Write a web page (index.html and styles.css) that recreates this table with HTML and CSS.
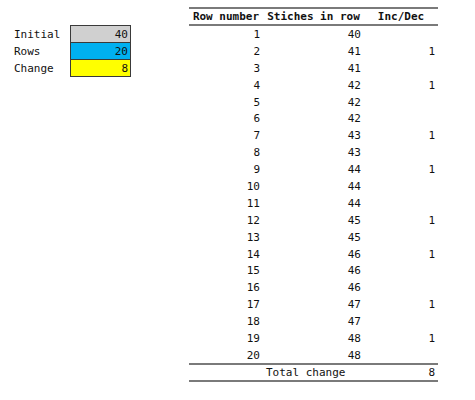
FILE: index.html
```html
<!DOCTYPE html>
<html>
<head>
<meta charset="utf-8">
<link rel="stylesheet" href="styles.css">
</head>
<body>
<div class="page">
  <div class="params">
    <div class="labels">
      <div class="lbl">Initial</div>
      <div class="lbl">Rows</div>
      <div class="lbl">Change</div>
    </div>
    <div class="box">
      <div class="cell grey">40</div>
      <div class="cell blue">20</div>
      <div class="cell yellow">8</div>
    </div>
  </div>
  <div class="table">
    <div class="head">
      <div class="h">Row number</div>
      <div class="h">Stiches in row</div>
      <div class="h">Inc/Dec</div>
    </div>
    <div class="body">
      <div class="row"><span>1</span><span>40</span><span></span></div>
      <div class="row"><span>2</span><span>41</span><span>1</span></div>
      <div class="row"><span>3</span><span>41</span><span></span></div>
      <div class="row"><span>4</span><span>42</span><span>1</span></div>
      <div class="row"><span>5</span><span>42</span><span></span></div>
      <div class="row"><span>6</span><span>42</span><span></span></div>
      <div class="row"><span>7</span><span>43</span><span>1</span></div>
      <div class="row"><span>8</span><span>43</span><span></span></div>
      <div class="row"><span>9</span><span>44</span><span>1</span></div>
      <div class="row"><span>10</span><span>44</span><span></span></div>
      <div class="row"><span>11</span><span>44</span><span></span></div>
      <div class="row"><span>12</span><span>45</span><span>1</span></div>
      <div class="row"><span>13</span><span>45</span><span></span></div>
      <div class="row"><span>14</span><span>46</span><span>1</span></div>
      <div class="row"><span>15</span><span>46</span><span></span></div>
      <div class="row"><span>16</span><span>46</span><span></span></div>
      <div class="row"><span>17</span><span>47</span><span>1</span></div>
      <div class="row"><span>18</span><span>47</span><span></span></div>
      <div class="row"><span>19</span><span>48</span><span>1</span></div>
      <div class="row"><span>20</span><span>48</span><span></span></div>
    </div>
    <div class="total">
      <span></span><span class="tl">Total change</span><span>8</span>
    </div>
  </div>
</div>
</body>
</html>
```
FILE: styles.css
```css
html, body {
  margin: 0;
  padding: 0;
  background: #fff;
}
body {
  font-family: "DejaVu Sans Mono", "Liberation Mono", monospace;
  font-size: 11px;
  color: #111;
}
.page {
  display: flex;
  align-items: flex-start;
}
.params {
  display: flex;
  margin-left: 14px;
  margin-top: 25px;
}
.labels {
  width: 56px;
  display: flex;
  flex-direction: column;
  padding-top: 1px;
}
.lbl {
  height: 17px;
  line-height: 17px;
}
.box {
  width: 59px;
  border: 1px solid #3a3a3a;
  display: flex;
  flex-direction: column;
}
.cell {
  height: 16px;
  line-height: 17px;
  text-align: right;
  padding-right: 2px;
}
.cell + .cell {
  border-top: 1px solid #3a3a3a;
}
.grey { background: #d0d0d0; }
.blue { background: #00b0f0; }
.yellow { background: #ffff00; }

.table {
  margin-left: 58px;
  margin-top: 7px;
  width: 249px;
}
.head, .row, .total {
  display: grid;
  grid-template-columns: 74px 101px 74px;
}
.head {
  border-top: 2px solid #7a7a7a;
  border-bottom: 2px solid #7a7a7a;
  height: 15px;
  line-height: 16px;
  font-weight: bold;
}
.h {
  text-align: center;
  white-space: nowrap;
}
.row {
  height: 16.9px;
  line-height: 17px;
}
.row span, .total span {
  text-align: right;
  padding-right: 3px;
}
.total {
  border-top: 2px solid #7a7a7a;
  border-bottom: 2px solid #7a7a7a;
  height: 15px;
  line-height: 16px;
  margin-top: -1px;
}
.total .tl {
  text-align: left;
  padding-left: 3px;
  white-space: nowrap;
}
```
